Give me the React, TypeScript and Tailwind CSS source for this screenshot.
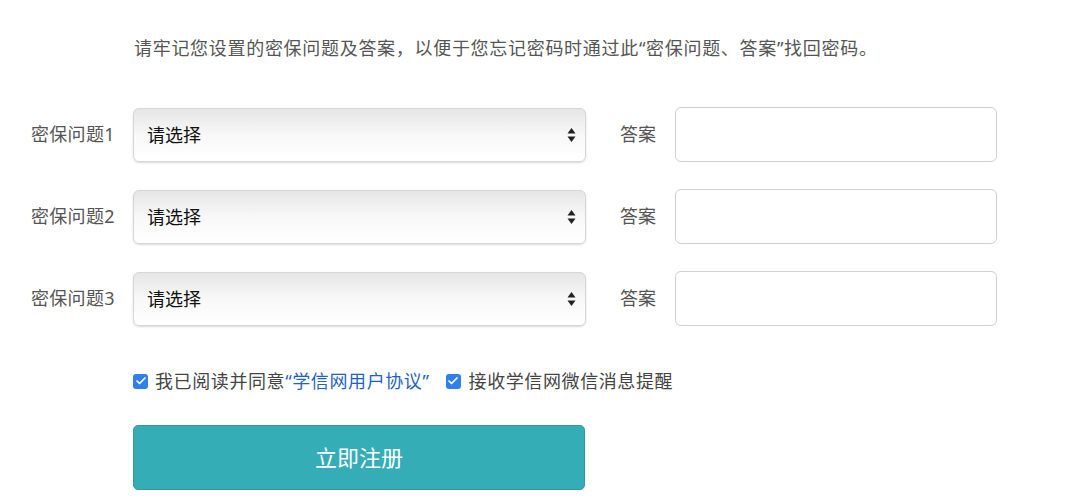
import React from 'react';
import { Check } from 'lucide-react';

const font = { fontFamily: '"Noto Sans", "Noto Sans CJK SC", sans-serif' };

const SelectArrows = () => (
  <svg width="9" height="16" viewBox="0 0 9 16" className="text-[#222]">
    <path d="M4.5 1 L8.5 6.5 H0.5 Z" fill="currentColor" />
    <path d="M4.5 15 L8.5 9.5 H0.5 Z" fill="currentColor" />
  </svg>
);

const QuestionRow = ({ n }: { n: number }) => (
  <div className="flex items-center h-[56px]">
    <div className="w-[102px] text-[18px] tracking-[0.3px] text-[#555]">密保问题{n}</div>
    <div className="w-[453px] h-[54px] mt-[2px] flex items-center justify-between pl-[13px] pr-[9px] rounded-[6px] border border-[#d6d6d6] bg-gradient-to-b from-[#e6e6e6] via-[#f8f8f8] to-[#ffffff] shadow-[0_1px_2px_rgba(0,0,0,0.15)]">
      <span className="text-[18px] text-[#111]">请选择</span>
      <SelectArrows />
    </div>
    <div className="ml-[34px] w-[55px] text-[18px] text-[#555]">答案</div>
    <div className="w-[322px] h-[55px] rounded-[6px] border border-[#cfcfcf] bg-white" />
  </div>
);

const Box = () => (
  <span className="w-[15px] h-[15px] rounded-[3px] bg-[#2f80ed] flex items-center justify-center">
    <Check size={12} strokeWidth={3.5} className="text-white" />
  </span>
);

export default function App() {
  return (
    <div className="w-[1080px] h-[499px] bg-white overflow-hidden pl-[31px]" style={font}>
      <p className="pl-[103px] pt-[35px] text-[18px] leading-[26px] tracking-[0.7px] text-[#555]">
        请牢记您设置的密保问题及答案，以便于您忘记密码时通过此“密保问题、答案”找回密码。
      </p>
      <div className="mt-[45px] flex flex-col gap-[26px]">
        <QuestionRow n={1} />
        <QuestionRow n={2} />
        <QuestionRow n={3} />
      </div>
      <div className="ml-[102px] mt-[42px] flex items-center h-[26px] text-[18px] tracking-[0.6px] text-[#444]">
        <Box />
        <span className="ml-[7px]">我已阅读并同意</span>
        <span className="text-[#1f62c0]">“学信网用户协议”</span>
        <span className="ml-[16px]"><Box /></span>
        <span className="ml-[8px]">接收学信网微信消息提醒</span>
      </div>
      <button className="ml-[102px] mt-[31px] w-[452px] h-[65px] rounded-[5px] bg-[#35adb6] border border-[#2f9aa3] text-white text-[22px]">
        立即注册
      </button>
    </div>
  );
}
